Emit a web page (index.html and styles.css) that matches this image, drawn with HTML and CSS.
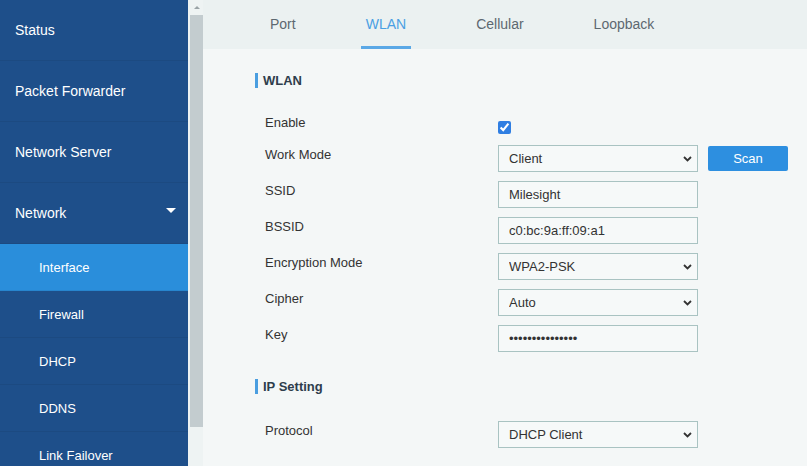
FILE: index.html
```html
<!DOCTYPE html>
<html lang="en">
<head>
  <meta charset="UTF-8">
  <title>Interface - WLAN</title>
  <link rel="stylesheet" href="styles.css">
</head>
<body>
  <div class="layout">
    <nav class="sidebar">
      <a class="nav-item">Status</a>
      <a class="nav-item">Packet Forwarder</a>
      <a class="nav-item">Network Server</a>
      <a class="nav-item">Network <span class="caret"></span></a>
      <a class="nav-sub active">Interface</a>
      <a class="nav-sub">Firewall</a>
      <a class="nav-sub">DHCP</a>
      <a class="nav-sub">DDNS</a>
      <a class="nav-sub">Link Failover</a>
    </nav>

    <div class="scrollbar">
      <span class="scroll-arrow"></span>
      <span class="scroll-thumb"></span>
    </div>

    <main class="content">
      <div class="tabs">
        <a class="tab">Port</a>
        <a class="tab active">WLAN</a>
        <a class="tab">Cellular</a>
        <a class="tab">Loopback</a>
      </div>

      <div class="panel">
        <h2 class="section-title">WLAN</h2>

        <div class="form-row enable-row">
          <label>Enable</label>
          <input type="checkbox" class="check" checked>
        </div>

        <div class="form-row">
          <label>Work Mode</label>
          <span class="select-wrap">
            <select><option>Client</option></select>
            <svg class="chev" width="9" height="6" viewBox="0 0 9 6"><path d="M1 1l3.5 3.5L8 1" fill="none" stroke="#333" stroke-width="1.8"/></svg>
          </span>
          <button class="btn">Scan</button>
        </div>

        <div class="form-row">
          <label>SSID</label>
          <input type="text" class="field" value="Milesight">
        </div>

        <div class="form-row">
          <label>BSSID</label>
          <input type="text" class="field" value="c0:bc:9a:ff:09:a1">
        </div>

        <div class="form-row">
          <label>Encryption Mode</label>
          <span class="select-wrap">
            <select><option>WPA2-PSK</option></select>
            <svg class="chev" width="9" height="6" viewBox="0 0 9 6"><path d="M1 1l3.5 3.5L8 1" fill="none" stroke="#333" stroke-width="1.8"/></svg>
          </span>
        </div>

        <div class="form-row">
          <label>Cipher</label>
          <span class="select-wrap">
            <select><option>Auto</option></select>
            <svg class="chev" width="9" height="6" viewBox="0 0 9 6"><path d="M1 1l3.5 3.5L8 1" fill="none" stroke="#333" stroke-width="1.8"/></svg>
          </span>
        </div>

        <div class="form-row">
          <label>Key</label>
          <input type="password" class="field" value="milesight123456">
        </div>

        <h2 class="section-title second">IP Setting</h2>

        <div class="form-row">
          <label>Protocol</label>
          <span class="select-wrap">
            <select><option>DHCP Client</option></select>
            <svg class="chev" width="9" height="6" viewBox="0 0 9 6"><path d="M1 1l3.5 3.5L8 1" fill="none" stroke="#333" stroke-width="1.8"/></svg>
          </span>
        </div>
      </div>
    </main>
  </div>
</body>
</html>
```

FILE: styles.css
```css
body {
  margin: 0;
  font-family: "Liberation Sans", Arial, sans-serif;
  background: #f4f7f7;
  color: #333;
  overflow: hidden;
}
.layout {
  display: flex;
  height: 466px;
  overflow: hidden;
}

/* sidebar */
.sidebar {
  width: 188px;
  flex-shrink: 0;
  background: #1e4f8a;
  display: flex;
  flex-direction: column;
}
.nav-item, .nav-sub {
  display: flex;
  flex-shrink: 0;
  align-items: center;
  justify-content: space-between;
  box-sizing: border-box;
  color: #fff;
  border-bottom: 1px solid rgba(0, 0, 0, 0.06);
}
.nav-item {
  height: 61px;
  padding: 0 12px 0 15px;
  font-size: 14px;
}
.nav-sub {
  height: 47px;
  padding-left: 39px;
  font-size: 13px;
}
.nav-sub.active { background: #2a8edb; }
.caret {
  width: 0;
  height: 0;
  border-left: 5px solid transparent;
  border-right: 5px solid transparent;
  border-top: 5px solid #fff;
  margin-top: -6px;
}

/* fake scrollbar of the menu */
.scrollbar {
  width: 13px;
  flex-shrink: 0;
  padding-left: 2px;
  background: #eef3f3;
  display: flex;
  flex-direction: column;
  align-items: center;
}
.scroll-arrow {
  width: 0;
  height: 0;
  margin: 6px 0 6px;
  border-left: 3px solid transparent;
  border-right: 3px solid transparent;
  border-bottom: 3px solid #9aa3a6;
}
.scroll-thumb {
  width: 13px;
  height: 412px;
  background: #c3cccf;
}

/* main */
.content {
  flex: 1;
  background: #f4f7f7;
}
.tabs {
  height: 49px;
  background: #ebf1f1;
  display: flex;
  padding-left: 32px;
}
.tab {
  position: relative;
  display: flex;
  align-items: center;
  padding: 0 35px 1px;
  font-size: 14px;
  color: #5d6870;
}
.tab.active { color: #4a9fe3; }
.tab.active::after {
  content: "";
  position: absolute;
  left: 30px;
  right: 30px;
  bottom: 0;
  height: 3px;
  background: #5aa8e6;
}

.panel {
  padding: 24px 0 0 52px;
}
.section-title {
  margin: 0 0 27px;
  height: 15px;
  line-height: 15px;
  padding-left: 5px;
  border-left: 3px solid #4a9ee0;
  font-size: 13px;
  font-weight: bold;
  color: #2e3d4c;
}
.section-title.second { margin-top: 27px; }

.form-row {
  display: flex;
  align-items: flex-start;
  padding-left: 10px;
  margin-bottom: 9px;
}
.form-row label {
  width: 233px;
  padding-top: 2px;
  line-height: 16px;
  font-size: 13px;
  color: #333;
}
.enable-row { margin-bottom: 11px; }
.enable-row label { padding-top: 0; }
.check {
  width: 13px;
  height: 13px;
  margin: 6px 0 0;
  accent-color: #2f7ee2;
}

.field, .select-wrap select {
  width: 200px;
  height: 27px;
  box-sizing: border-box;
  border: 1px solid #a9c3c2;
  background: #f6f9f9;
  padding: 0 10px;
  font-family: inherit;
  font-size: 13px;
  color: #333;
  border-radius: 0;
  outline: none;
}
.select-wrap {
  position: relative;
  display: block;
}
.select-wrap select {
  appearance: none;
  -webkit-appearance: none;
}
.chev {
  position: absolute;
  right: 6px;
  top: 11px;
}
.btn {
  margin: 1px 0 0 10px;
  width: 80px;
  height: 25px;
  border: none;
  border-radius: 2px;
  background: #2d8fe0;
  color: #fff;
  font-family: inherit;
  font-size: 13px;
}
```
